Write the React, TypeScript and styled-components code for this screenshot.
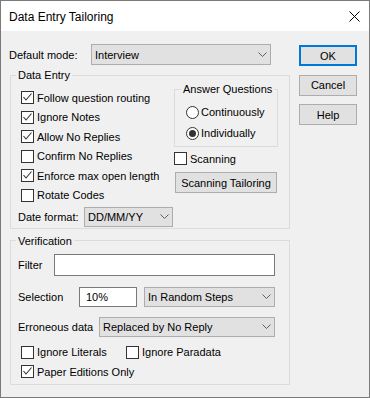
import React from "react"
import styled, { createGlobalStyle } from "styled-components"

const GlobalStyle = createGlobalStyle`
  html, body {
    margin: 0;
    padding: 0;
    background: #f0f0f0;
  }
  body {
    font-family: "Liberation Sans", Arial, sans-serif;
    font-size: 11px;
    color: #000;
  }
`

const Window = styled.div`
  box-sizing: border-box;
  width: 370px;
  height: 398px;
  border: 1px solid #7a7a7a;
  background: #f0f0f0;
  display: flex;
  flex-direction: column;
`

const TitleBar = styled.div`
  height: 30px;
  background: #fff;
  display: flex;
  align-items: center;
  justify-content: space-between;
  padding: 0 9px 0 8px;
`

const Title = styled.span`
  font-size: 12px;
  padding-top: 1px;
`

const Body = styled.div`
  display: flex;
  gap: 9px;
  padding: 13px 0 0 8px;
`

const Main = styled.div`
  width: 281px;
  display: flex;
  flex-direction: column;
`

const ButtonColumn = styled.div`
  display: flex;
  flex-direction: column;
  gap: 8.5px;
  margin-top: 1px;
`

const Row = styled.div<{ $gap?: number; $mt?: number; $h?: number; $pl?: number; $pb?: number }>`
  display: flex;
  align-items: center;
  gap: ${({ $gap }) => $gap ?? 0}px;
  margin-top: ${({ $mt }) => $mt ?? 0}px;
  padding: 0 0 ${({ $pb }) => $pb ?? 0}px ${({ $pl }) => $pl ?? 0}px;
  height: ${({ $h }) => ($h ? `${$h}px` : "auto")};
`

const Label = styled.span<{ $w?: number }>`
  display: inline-block;
  width: ${({ $w }) => ($w ? `${$w}px` : "auto")};
  white-space: nowrap;
`

const PushButton = styled.button<{ $default?: boolean; $w?: number; $ml?: number }>`
  box-sizing: border-box;
  width: ${({ $w }) => $w ?? 58}px;
  height: 21px;
  margin-left: ${({ $ml }) => $ml ?? 0}px;
  padding: 0;
  font: inherit;
  color: #000;
  background: #e1e1e1;
  border: ${({ $default }) =>
    $default ? "2px solid #0078d7" : "1px solid #adadad"};
`

const ComboBox = styled.div<{ $w: number; $h?: number }>`
  box-sizing: border-box;
  width: ${({ $w }) => $w}px;
  height: ${({ $h }) => $h ?? 20}px;
  background: #e1e1e1;
  border: 1px solid #adadad;
  display: flex;
  align-items: center;
  justify-content: space-between;
  padding: 0 3px 0 3px;
  white-space: nowrap;
`

const TextBox = styled.div<{ $w: number; $h?: number }>`
  box-sizing: border-box;
  width: ${({ $w }) => $w}px;
  height: ${({ $h }) => $h ?? 20}px;
  background: #fff;
  border: 1px solid #7a7a7a;
  display: flex;
  align-items: center;
  padding-left: 6px;
`

const Group = styled.fieldset<{ $w: number; $ml?: number; $mt?: number }>`
  box-sizing: border-box;
  width: ${({ $w }) => $w}px;
  margin: ${({ $mt }) => $mt ?? 0}px 0 0 ${({ $ml }) => $ml ?? 0}px;
  padding: 0;
  border: 1px solid #dcdcdc;
  min-width: 0;
`

const Legend = styled.legend<{ $ml?: number }>`
  margin-left: ${({ $ml }) => $ml ?? 5}px;
  padding: 0 2px;
  line-height: 14px;
  height: 14px;
`

const DataEntryGrid = styled.div`
  display: grid;
  grid-template-columns: 163px 104px;
`

const CheckList = styled.div`
  display: flex;
  flex-direction: column;
  padding: 6px 0 0 10px;
`

const SideColumn = styled.div`
  display: flex;
  flex-direction: column;
`

const OptionRow = styled.label<{ $h?: number; $w?: number; $gap?: number }>`
  display: flex;
  align-items: center;
  gap: ${({ $gap }) => $gap ?? 3}px;
  height: ${({ $h }) => $h ?? 19.5}px;
  width: ${({ $w }) => ($w ? `${$w}px` : "auto")};
  white-space: nowrap;
`

const Box = styled.span`
  box-sizing: border-box;
  width: 13px;
  height: 13px;
  flex: none;
  border: 1px solid #333;
  background: #fff;
  display: flex;
  align-items: center;
  justify-content: center;
`

const Radio = styled.span`
  box-sizing: border-box;
  width: 13px;
  height: 13px;
  flex: none;
  border: 1px solid #333;
  border-radius: 50%;
  background: #fff;
  display: flex;
  align-items: center;
  justify-content: center;
`

const RadioDot = styled.span`
  width: 7px;
  height: 7px;
  border-radius: 50%;
  background: #333;
`

const RadioList = styled.div`
  display: flex;
  flex-direction: column;
  padding: 5.5px 0 2px 11px;
`

const Stack = styled.div`
  display: flex;
  flex-direction: column;
  padding: 0 13px 0 7px;
`

const Chevron = () => (
  <svg width="9" height="5" viewBox="0 0 9 5">
    <polyline points="0.5,0.5 4.5,4.5 8.5,0.5" fill="none" stroke="#606060" strokeWidth="1" />
  </svg>
)

const CloseIcon = () => (
  <svg width="11" height="11" viewBox="0 0 11 11">
    <line x1="0.5" y1="0.5" x2="10.5" y2="10.5" stroke="#000" strokeWidth="1" />
    <line x1="10.5" y1="0.5" x2="0.5" y2="10.5" stroke="#000" strokeWidth="1" />
  </svg>
)

function Check({ label, checked, w }: { label: string; checked?: boolean; w?: number }) {
  return (
    <OptionRow $w={w}>
      <Box>
        {checked && (
          <svg width="11" height="11" viewBox="0 0 11 11">
            <polyline points="1.5,5 4,8 9.5,1.5" fill="none" stroke="#333" strokeWidth="1.1" />
          </svg>
        )}
      </Box>
      {label}
    </OptionRow>
  )
}

function Option({ label, selected }: { label: string; selected?: boolean }) {
  return (
    <OptionRow $h={21} $gap={2}>
      <Radio>{selected && <RadioDot />}</Radio>
      {label}
    </OptionRow>
  )
}

function Combo({ value, w, h }: { value: string; w: number; h?: number }) {
  return (
    <ComboBox $w={w} $h={h}>
      <span>{value}</span>
      <Chevron />
    </ComboBox>
  )
}

export default function App() {
  return (
    <>
      <GlobalStyle />
      <Window>
        <TitleBar>
          <Title>Data Entry Tailoring</Title>
          <CloseIcon />
        </TitleBar>
        <Body>
          <Main>
            <Row $h={21}>
              <Label $w={82}>Default mode:</Label>
              <Combo value="Interview" w={180} h={21} />
            </Row>

            <Group $w={280} $ml={1} $mt={3}>
              <Legend>Data Entry</Legend>
              <DataEntryGrid>
                <CheckList>
                  <Check label="Follow question routing" checked />
                  <Check label="Ignore Notes" checked />
                  <Check label="Allow No Replies" checked />
                  <Check label="Confirm No Replies" />
                  <Check label="Enforce max open length" checked />
                  <Check label="Rotate Codes" />
                </CheckList>
                <SideColumn>
                  <Group $w={104}>
                    <Legend $ml={6}>Answer Questions</Legend>
                    <RadioList>
                      <Option label="Continuously" />
                      <Option label="Individually" selected />
                    </RadioList>
                  </Group>
                  <Row $mt={2.5}>
                    <Check label="Scanning" w={100} />
                  </Row>
                  <Row $mt={3.5}>
                    <PushButton $w={102} $ml={1}>
                      Scanning Tailoring
                    </PushButton>
                  </Row>
                </SideColumn>
              </DataEntryGrid>
              <Row $mt={1.75} $pl={7} $pb={1}>
                <Label $w={66}>Date format:</Label>
                <Combo value="DD/MM/YY" w={89} />
              </Row>
            </Group>

            <Group $w={280} $ml={1} $mt={5}>
              <Legend>Verification</Legend>
              <Stack>
                <Row $mt={6}>
                  <Label $w={36}>Filter</Label>
                  <TextBox $w={221} $h={22} />
                </Row>
                <Row $mt={11}>
                  <Label $w={61}>Selection</Label>
                  <TextBox $w={58}>10%</TextBox>
                  <Label $w={7} />
                  <Combo value="In Random Steps" w={131} />
                </Row>
                <Row $mt={10}>
                  <Label $w={81}>Erroneous data</Label>
                  <Combo value="Replaced by No Reply" w={176} />
                </Row>
                <Row $mt={5.5} $pl={3}>
                  <Check label="Ignore Literals" w={105} />
                  <Check label="Ignore Paradata" />
                </Row>
                <Row $pl={3} $pb={2.5}>
                  <Check label="Paper Editions Only" checked />
                </Row>
              </Stack>
            </Group>
          </Main>

          <ButtonColumn>
            <PushButton $default>OK</PushButton>
            <PushButton>Cancel</PushButton>
            <PushButton>Help</PushButton>
          </ButtonColumn>
        </Body>
      </Window>
    </>
  )
}
